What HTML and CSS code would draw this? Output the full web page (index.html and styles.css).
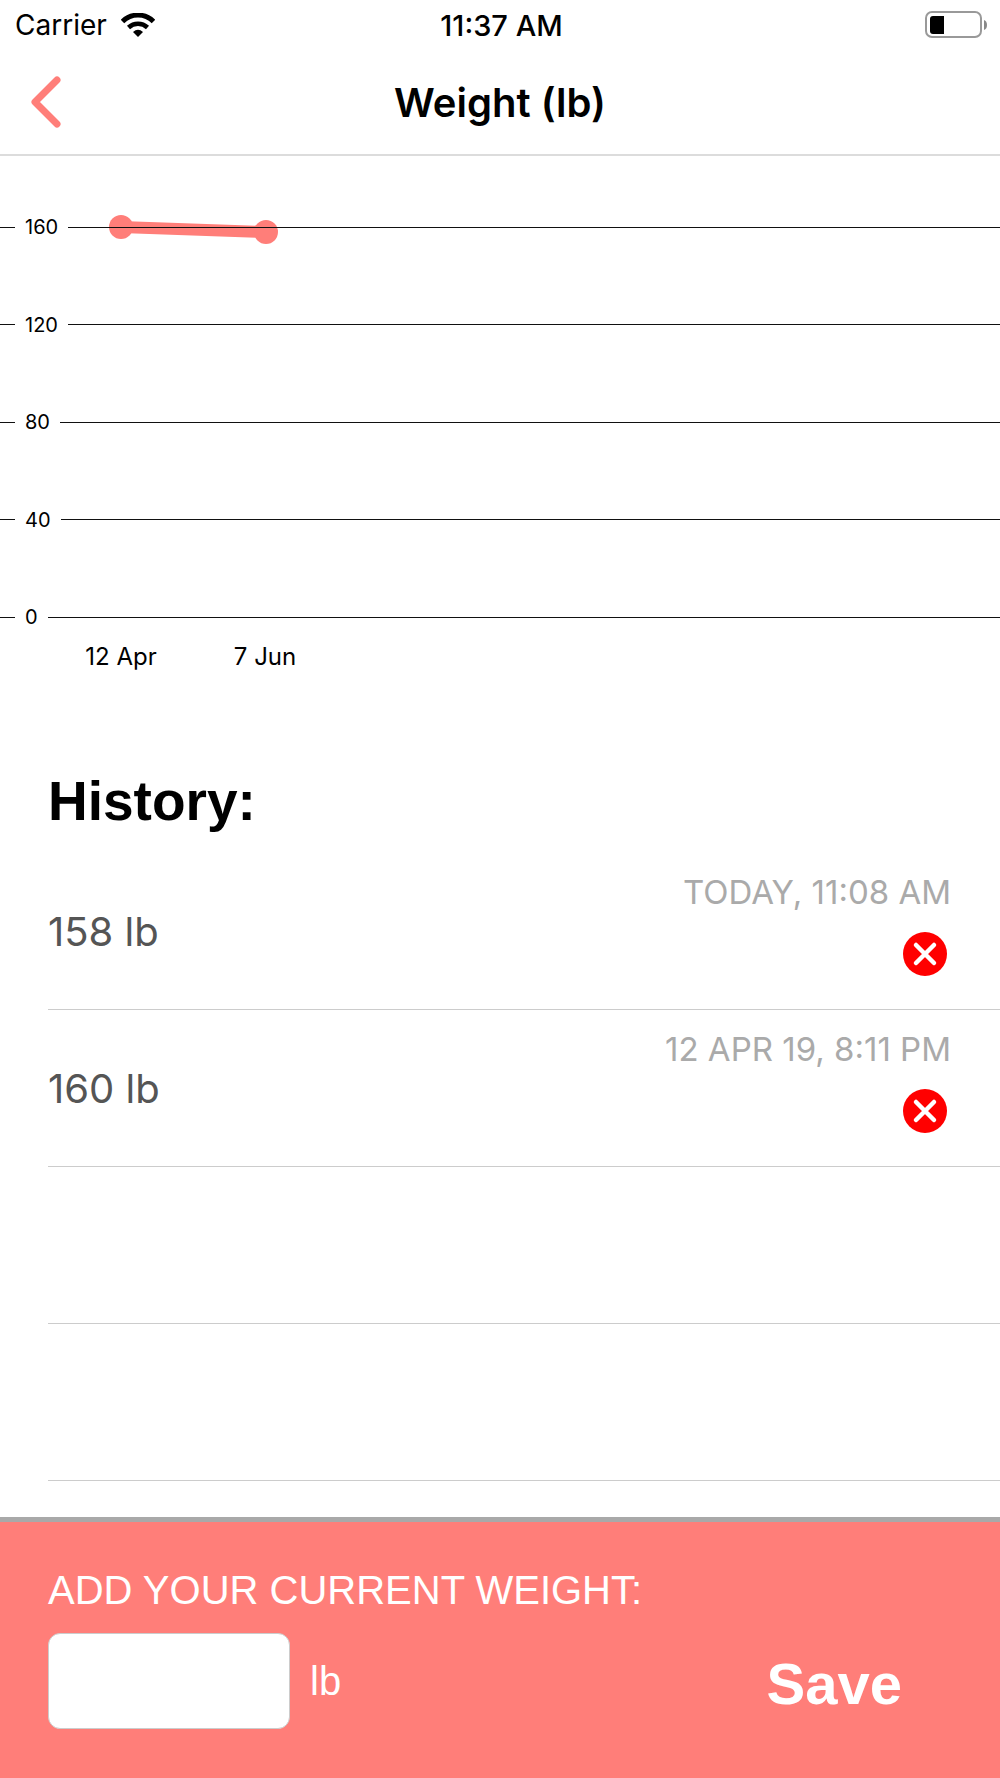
FILE: index.html
```html
<!DOCTYPE html>
<html lang="en">
<head>
    <meta charset="UTF-8">
    <meta name="viewport" content="width=device-width, initial-scale=1">
    <title>Weight (lb)</title>
    <link rel="stylesheet" href="styles.css">
</head>
<body>
    <div class="status">
        <div class="carrier">
            <span>Carrier</span>
            <svg class="wifi" width="34" height="24" viewBox="0 0 34 24">
                <path d="M1.500 8.500A22 22 0 0 1 32.500 8.500" fill="none" stroke="#000" stroke-width="5"/>
                <path d="M7.500 14.500A14 14 0 0 1 26.500 14.500" fill="none" stroke="#000" stroke-width="4.500"/>
                <path d="M12 19Q17 14.500 22 19L17 24Z"/>
            </svg>
        </div>
        <span class="time">11:37 AM</span>
        <svg class="battery" width="63" height="28" viewBox="0 0 63 28">
            <rect x="1" y="1" width="55" height="25" rx="6" fill="none" stroke="#999" stroke-width="2"/>
            <path d="M8 5H19V23H8Q5 23 5 20V8Q5 5 8 5Z"/>
            <path d="M59 9Q62 10 62 14T59 19Z" fill="#888"/>
        </svg>
    </div>
    <header class="nav">
        <button class="back" aria-label="Back">
            <svg width="32" height="52" viewBox="0 0 32 52">
                <path d="M26 4L4 26L26 48" fill="none" stroke="#ff7e79" stroke-width="7" stroke-linecap="round" stroke-linejoin="round"/>
            </svg>
        </button>
        <h1>Weight (lb)</h1>
    </header>
    <section class="chart">
        <div class="plot">
            <svg class="series" width="300" height="414">
                <path d="M121 12L266 17" stroke="#ff7e79" stroke-width="12"/>
                <circle cx="121" cy="12" r="12" fill="#ff7e79"/>
                <circle cx="266" cy="17" r="12" fill="#ff7e79"/>
            </svg>
            <div class="line"><span>160</span></div>
            <div class="line"><span>120</span></div>
            <div class="line"><span>80</span></div>
            <div class="line"><span>40</span></div>
            <div class="line"><span>0</span></div>
        </div>
        <div class="dates">
            <span>12 Apr</span>
            <span>7 Jun</span>
        </div>
    </section>
    <main class="history">
        <h2>History:</h2>
        <ul>
            <li>
                <span class="value">158 lb</span>
                <div class="info">
                    <span class="date">TODAY, 11:08 AM</span>
                    <button class="delete" aria-label="Delete 158 lb">
                        <svg width="44" height="44" viewBox="0 0 44 44">
                            <path d="M13 13L31 31M31 13L13 31" stroke="#fff" stroke-width="4.500" stroke-linecap="round"/>
                        </svg>
                    </button>
                </div>
            </li>
            <li>
                <span class="value">160 lb</span>
                <div class="info">
                    <span class="date">12 APR 19, 8:11 PM</span>
                    <button class="delete" aria-label="Delete 160 lb">
                        <svg width="44" height="44" viewBox="0 0 44 44">
                            <path d="M13 13L31 31M31 13L13 31" stroke="#fff" stroke-width="4.500" stroke-linecap="round"/>
                        </svg>
                    </button>
                </div>
            </li>
            <li></li>
            <li></li>
        </ul>
    </main>
    <form class="add">
        <label for="weight">ADD YOUR CURRENT WEIGHT:</label>
        <div class="entry">
            <input id="weight" type="text" inputmode="decimal">
            <span class="unit">lb</span>
            <button class="save" type="button">Save</button>
        </div>
    </form>
</body>
</html>
```

FILE: styles.css
```css
*{
    margin:0;
    padding:0;
    box-sizing:border-box;
}
body{
    display:flex;
    flex-direction:column;
    min-height:100vh;
    background-color:#fff;
    color:#000;
    font-family:Inter, "Liberation Sans", sans-serif;
}
button{
    border:0;
    background:none;
    cursor:pointer;
}
svg{
    display:block;
}
/* status bar */
.status{
    display:grid;
    grid-template-columns:1fr auto 1fr;
    align-items:center;
    height:50px;
    padding:0 12px 0 15px;
    font-size:28px;
}
.carrier{
    display:flex;
    align-items:center;
    gap:14px;
}
.time{
    font-size:29px;
    font-weight:500;
}
.battery{
    justify-self:end;
}
/* title bar */
.nav{
    display:grid;
    grid-template-columns:1fr auto 1fr;
    align-items:center;
    height:106px;
    padding:0 31px;
    border-bottom:2px solid #dcdcdc;
}
.nav h1{
    font-size:40px;
    font-weight:600;
}
.back{
    justify-self:start;
}
/* chart */
.chart{
    padding-top:59px;
}
.plot{
    position:relative;
    display:flex;
    flex-direction:column;
    justify-content:space-between;
    height:414px;
    isolation:isolate;
}
.series{
    position:absolute;
    top:0;
    left:0;
    z-index:-1;
}
.line{
    display:flex;
    align-items:center;
    gap:10px;
    height:24px;
    font-size:20px;
    line-height:24px;
}
.line::before,
.line::after{
    content:"";
    width:15px;
    height:1px;
    background-color:#111;
}
.line::after{
    flex:1;
}
.dates{
    display:flex;
    padding:12px 49px 0;
    font-size:24px;
    line-height:32px;
}
.dates span{
    width:144px;
    text-align:center;
}
/* history */
.history{
    flex:1;
    padding:96px 0 36px 48px;
}
.history h2{
    font-family:"Liberation Sans", sans-serif;
    font-size:55px;
    line-height:64px;
}
.history ul{
    padding-top:20px;
    list-style:none;
}
.history li{
    display:flex;
    align-items:center;
    justify-content:space-between;
    height:157px;
    padding-right:49px;
    border-bottom:1px solid #ccc;
}
.value{
    color:#555;
    font-size:40px;
}
.info{
    display:flex;
    flex-direction:column;
    align-items:flex-end;
    gap:20px;
    padding-bottom:14px;
}
.date{
    color:#aaa;
    font-size:33px;
    line-height:40px;
}
.delete{
    margin-right:4px;
    border-radius:50%;
    background-color:#f00;
}
/* new weight */
.add{
    height:261px;
    padding:44px 48px 0;
    border-top:5px solid #a9a9a9;
    background-color:#ff7e79;
    color:#fff;
    font-family:"Liberation Sans", sans-serif;
    font-size:40px;
}
.add label{
    display:block;
    line-height:48px;
}
.entry{
    display:flex;
    align-items:center;
    padding-top:19px;
}
.entry input{
    width:242px;
    height:96px;
    padding:0 20px;
    border:1px solid #ccc;
    border-radius:12px;
    background-color:#fff;
    font:inherit;
}
.unit{
    padding-left:20px;
}
.save{
    margin-left:auto;
    padding:4px 50px 0 0;
    color:#fff;
    font-family:inherit;
    font-size:58px;
    font-weight:bold;
}
```
